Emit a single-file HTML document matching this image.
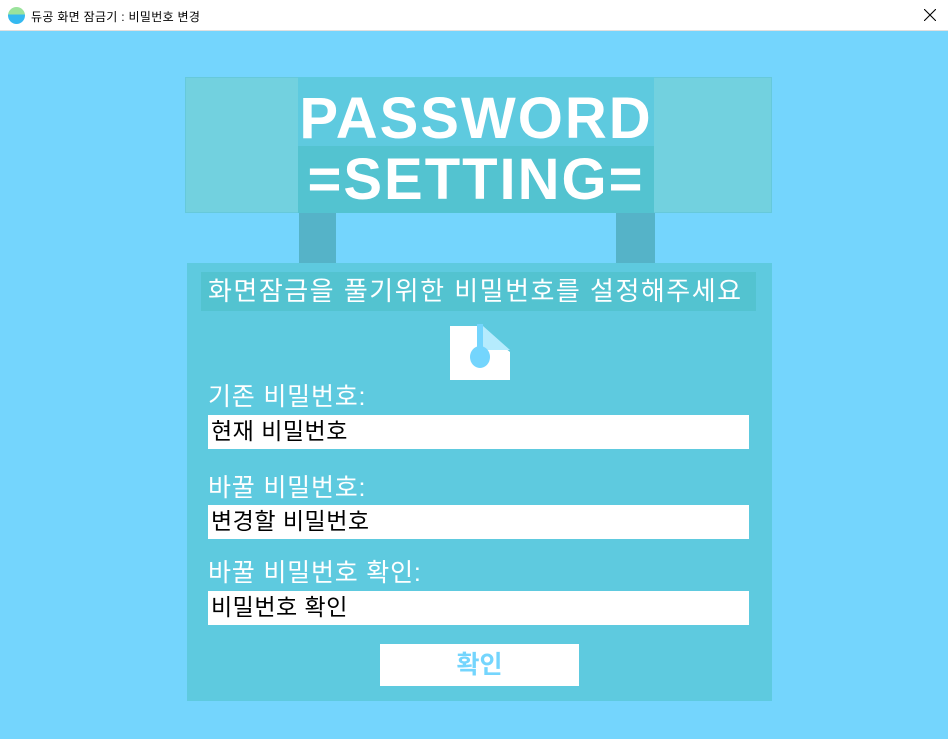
<!DOCTYPE html>
<html><head><meta charset="utf-8"><style>
body{margin:0;width:948px;height:739px;overflow:hidden;background:#74d5fd;position:relative;font-family:"Liberation Sans","Noto Sans CJK KR",sans-serif}
div{position:absolute;box-sizing:border-box}
.tb{left:0;top:0;width:948px;height:31px;background:#fff;border-bottom:1px solid #e0e0e0}
.t{font-size:12px;color:#000;left:31px;top:8px;white-space:nowrap;letter-spacing:0.3px}
.lbl{color:#fff;font-size:25px;left:208px;white-space:nowrap;line-height:30px;letter-spacing:0.8px}
.in{left:208px;width:541px;height:34px;background:#fff;font-size:23px;color:#000;padding-left:3px;line-height:32px;white-space:nowrap;letter-spacing:0.5px}
.big{color:#fff;font-weight:bold;font-size:58px;left:298px;width:356px;text-align:center;line-height:60px;letter-spacing:2px}
</style></head><body>
<div class="tb"></div>
<div style="left:8px;top:7px;width:17px;height:17px;border-radius:50%;background:linear-gradient(#9be39c 45%,#35b9f0 45%)"></div>
<div class="t">듀공 화면 잠금기 : 비밀번호 변경</div>
<svg style="position:absolute;left:924px;top:9px" width="12" height="12"><path d="M0 0L12 12M12 0L0 12" stroke="#000" stroke-width="1.1"/></svg>
<div style="left:185px;top:77px;width:587px;height:136px;background:#72d1df;border:1px solid #66c9da"></div>
<div style="left:298px;top:77px;width:356px;height:69px;background:#5ecadf"></div>
<div style="left:298px;top:146px;width:356px;height:67px;background:#53c3d0"></div>
<div class="big" style="top:89px">PASSWORD</div>
<div class="big" style="top:150px">=SETTING=</div>
<div style="left:299px;top:213px;width:37px;height:50px;background:#55b3c8"></div>
<div style="left:616px;top:213px;width:39px;height:50px;background:#55b3c8"></div>
<div style="left:187px;top:263px;width:585px;height:438px;background:#5ecadf"></div>
<div style="left:201px;top:272px;width:555px;height:39px;background:#53c3d0"></div>
<div style="left:208px;top:276px;color:#fff;font-size:26px;white-space:nowrap;line-height:30px;letter-spacing:1.5px">화면잠금을 풀기위한 비밀번호를 설정해주세요</div>
<svg style="position:absolute;left:450px;top:324px" width="61" height="57"><path d="M0 2H28L60 28V56H0Z" fill="#fff"/><path d="M33 2L60 26H33Z" fill="#b5ebfd"/><rect x="27" y="0" width="6" height="28" fill="#74d5fd"/><ellipse cx="30" cy="33" rx="10" ry="11" fill="#74d5fd"/></svg>
<div class="lbl" style="top:382px">기존 비밀번호:</div>
<div class="in" style="top:415px">현재 비밀번호</div>
<div class="lbl" style="top:473px">바꿀 비밀번호:</div>
<div class="in" style="top:505px">변경할 비밀번호</div>
<div class="lbl" style="top:558px">바꿀 비밀번호 확인:</div>
<div class="in" style="top:591px">비밀번호 확인</div>
<div style="left:380px;top:644px;width:199px;height:42px;background:#fff;color:#74d5fd;font-size:25px;font-weight:bold;text-align:center;line-height:42px">확인</div>
</body></html>
